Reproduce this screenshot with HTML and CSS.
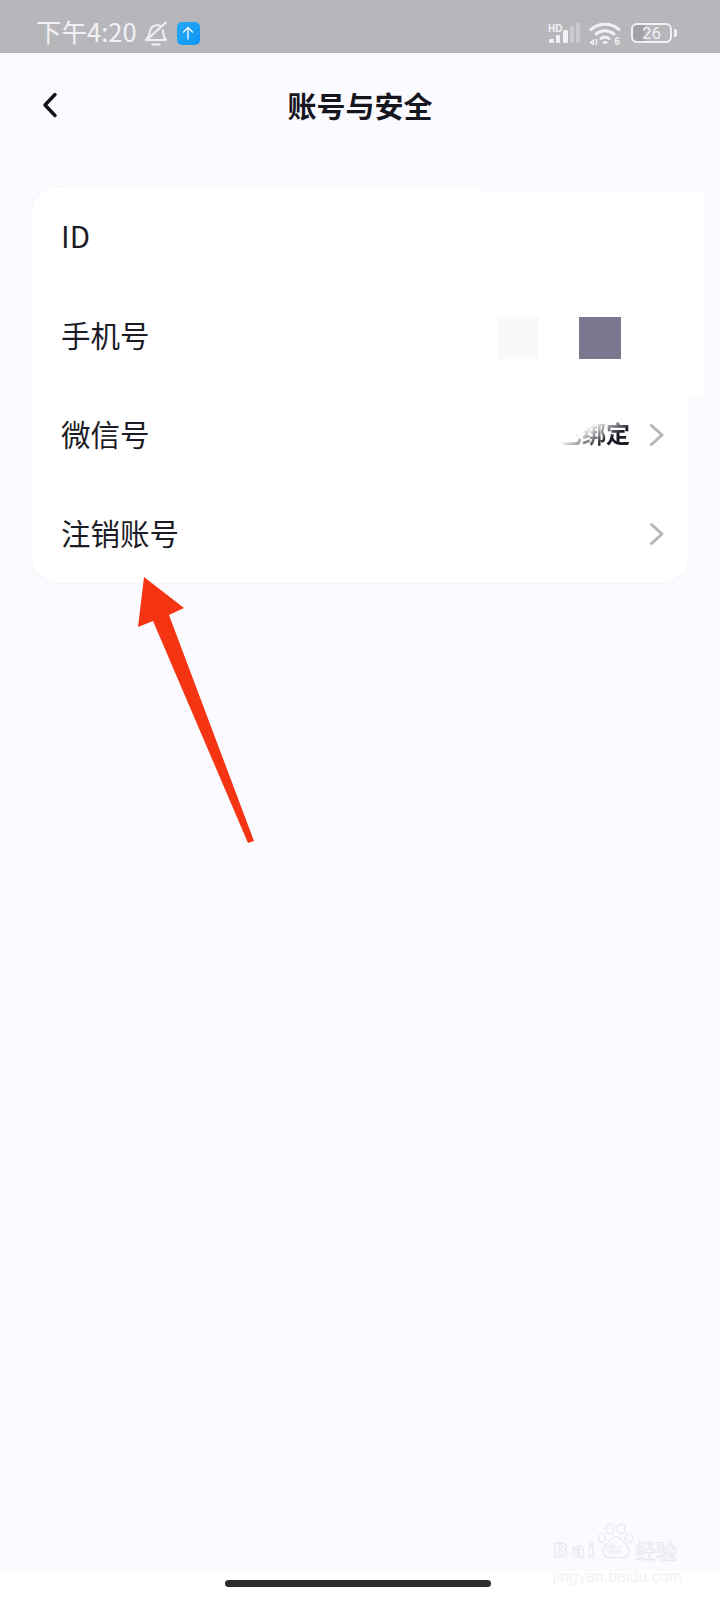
FILE: index.html
```html
<!DOCTYPE html>
<html lang="zh-CN">
<head>
  <meta charset="UTF-8" />
  <title>账号与安全</title>
  <link rel="stylesheet" href="styles.css">
</head>
<body>
  <div class="app">
    <div class="status-bar">
      <div class="status-left">
        <span class="time">下午4:20</span>
        <svg class="bell" width="24" height="25" viewBox="0 0 24 25" fill="none" stroke="#f1f1f3" stroke-width="2" stroke-linecap="round" stroke-linejoin="round">
          <path d="M2 19c2.500-2 3.200-4 3.700-7.500C6.300 7 9 4.500 12.500 4.200c2-.2 3.500.2 4.800 1.100" />
          <path d="M19 9.500c.2 4 .9 7.300 3 9.500H2" />
          <path d="M22 1.500 2.500 19" />
          <path d="M8.500 23.500h7" />
        </svg>
        <div class="app-badge">
          <svg width="12" height="14" viewBox="0 0 12 14" fill="none" stroke="#fff" stroke-width="1.300" stroke-linecap="round" stroke-linejoin="round"><path d="M6 13V1.500M1.500 6 6 1.500 10.500 6" /></svg>
        </div>
      </div>
      <div class="status-right">
        <svg width="33" height="21" viewBox="0 0 33 21" fill="#f1f1f3">
          <text x="0" y="8.500" class="hd">HD</text>
          <rect x="1" y="16" width="5" height="4" rx="1" />
          <rect x="8" y="12" width="4" height="8" rx="1" />
          <rect x="15" y="7" width="5" height="13" rx="1" />
          <rect x="22" y="3" width="4" height="17" rx="1" opacity=".35" />
          <rect x="28" y="0" width="4" height="20" rx="1" opacity=".35" />
        </svg>
        <svg class="wifi" width="33" height="24" viewBox="0 0 33 24" fill="none" stroke="#f1f1f3" stroke-width="3" stroke-linecap="round">
          <path d="M2 8.500C9.500 1.500 22.500 1.500 30 8.500" />
          <path d="M7 13c5.500-4.500 12.500-4.500 18 0" />
          <path d="M12 17.500c3-1.800 5-1.800 8 0" />
          <path d="M14.800 21.500h2.400" stroke-width="2.600" />
          <path d="M1.500 21.500l3-2.500v4.500zM7.500 18.500v5" stroke-width="1.500" />
          <text x="25.500" y="23.500" class="wifi-six">6</text>
        </svg>
        <div class="battery">
          <div class="battery-body"><span class="battery-level">26</span></div>
          <div class="battery-cap"></div>
        </div>
      </div>
    </div>

    <div class="main">
      <div class="nav">
        <svg class="back" width="16" height="26" viewBox="0 0 16 26" fill="none" stroke="#111118" stroke-width="3.400" stroke-linecap="round" stroke-linejoin="round"><path d="M13 2.500 3 13l10 10.500" /></svg>
        <div class="nav-title">账号与安全</div>
      </div>

      <div class="card">
        <div class="row"><span class="row-label">ID</span></div>
        <div class="row"><span class="row-label">手机号</span></div>
        <div class="row">
          <span class="row-label">微信号</span>
          <span class="row-value">已绑定</span>
          <svg class="chevron" width="15" height="24" viewBox="0 0 15 24" fill="none" stroke="#b6b6b9" stroke-width="3" stroke-linecap="round" stroke-linejoin="round"><path d="M2.500 2.500 13 12 2.500 21.500" /></svg>
        </div>
        <div class="row">
          <span class="row-label">注销账号</span>
          <svg class="chevron" width="15" height="24" viewBox="0 0 15 24" fill="none" stroke="#b6b6b9" stroke-width="3" stroke-linecap="round" stroke-linejoin="round"><path d="M2.500 2.500 13 12 2.500 21.500" /></svg>
        </div>

        <!-- 打码遮挡 -->
        <div class="redact">
          <div class="redact-square light"></div>
          <div class="redact-square dark"></div>
        </div>
      </div>

      <svg class="arrow" width="122" height="275" viewBox="0 0 122 275">
        <path fill="#f43412" d="M10 6 4 56 19 50 114 272 120 270 35 44 50 37z" />
      </svg>

      <div class="watermark">
        <div class="wm-top">
          <span class="wm-bai">Bai</span>
          <svg class="wm-paw" width="38" height="38" viewBox="0 0 38 38" fill="none" stroke="#e6e6ea" stroke-width="1.100">
            <ellipse cx="13" cy="6" rx="4" ry="5" />
            <ellipse cx="24" cy="6" rx="4" ry="5" />
            <ellipse cx="5" cy="15" rx="3.500" ry="4.500" />
            <ellipse cx="32" cy="15" rx="3.500" ry="4.500" />
            <path d="M19 14c-5 0-6 5-10 8-5 4-3 13 4 13 3 0 4-1 6-1s3 1 6 1c7 0 9-9 4-13-4-3-5-8-10-8z" />
            <text x="9.500" y="30" class="wm-du">du</text>
          </svg>
          <span class="wm-jy">经验</span>
        </div>
        <div class="wm-url">jingyan.baidu.com</div>
      </div>
    </div>

    <div class="home-area">
      <div class="home-bar"></div>
    </div>
  </div>
</body>
</html>
```

FILE: styles.css
```css
body {
  margin: 0;
  font-family: "Noto Sans CJK SC", "Noto Sans", sans-serif;
  background: #fafaff;
  color: #1c1c26;
}

.app {
  width: 720px;
  height: 1600px;
  display: flex;
  flex-direction: column;
  overflow: hidden;
}

/* 状态栏 */
.status-bar {
  height: 53px;
  flex: none;
  box-sizing: border-box;
  background: #b7b6bb;
  display: flex;
  justify-content: space-between;
  align-items: center;
  padding: 13px 43px 0 36px;
}

.status-left,
.status-right {
  display: flex;
  align-items: center;
}

.time {
  font-size: 25.500px;
  line-height: 30px;
  margin-bottom: 4px;
  color: #f1f1f3;
}

.bell {
  margin-left: 7px;
}

.app-badge {
  width: 23px;
  height: 23px;
  margin-left: 9px;
  border-radius: 5px;
  background: linear-gradient(135deg, #2aa8f8, #0d96f5);
  display: flex;
  align-items: center;
  justify-content: center;
}

.hd {
  font-family: "Liberation Sans", sans-serif;
  font-size: 10px;
  font-weight: 700;
}

.wifi {
  margin-left: 8px;
}

.wifi-six {
  font-family: "Liberation Sans", sans-serif;
  font-size: 10px;
  font-weight: 700;
  fill: #f1f1f3;
  stroke: none;
}

.battery {
  display: flex;
  align-items: center;
  margin-left: 9px;
}

.battery-body {
  width: 41px;
  height: 20px;
  box-sizing: border-box;
  border: 2px solid #f1f1f3;
  border-radius: 6px;
  display: flex;
  align-items: center;
  justify-content: center;
  background: linear-gradient(90deg, #a2a1a6 32%, transparent 32%);
}

.battery-level {
  font-family: Roboto, sans-serif;
  font-size: 17px;
  line-height: 18px;
  color: #f1f1f3;
}

.battery-cap {
  width: 3px;
  height: 8px;
  margin-left: 2px;
  border-radius: 0 2px 2px 0;
  background: #f1f1f3;
}

/* 页面 */
.main {
  flex: 1;
  position: relative;
  background: #fafaff;
}

.nav {
  height: 106px;
  box-sizing: border-box;
  padding-bottom: 2px;
  display: flex;
  align-items: center;
  justify-content: center;
}

.back {
  position: absolute;
  left: 42px;
  top: 39px;
}

.nav-title {
  font-size: 29px;
  font-weight: 700;
  color: #16161e;
}

.card {
  position: relative;
  margin: 28px 31px 0;
  background: #fff;
  border-radius: 28px;
  box-shadow: 0 0 0 1px #f5f5fa;
}

.row {
  height: 99px;
  box-sizing: border-box;
  padding: 0 25px 4px 30px;
  display: flex;
  align-items: center;
  font-size: 29.500px;
}

.row-label {
  flex: 1;
}

.row-value {
  margin-right: 19px;
  font-size: 24px;
  font-weight: 700;
  color: #1c1c26;
  -webkit-mask-image: linear-gradient(150deg, transparent 38%, rgba(0, 0, 0, 0.5) 55%, #000 70%);
  mask-image: linear-gradient(150deg, transparent 38%, rgba(0, 0, 0, 0.5) 55%, #000 70%);
}

.chevron {
  margin-top: 4px;
}

.redact {
  position: absolute;
  left: 447px;
  top: 0;
  width: 226px;
  height: 210px;
  box-sizing: border-box;
  border-top: 6px solid #fafaff;
  background: #fff;
  display: flex;
  gap: 40px;
  padding: 124px 0 0 19px;
}

.redact-square {
  width: 42px;
  height: 42px;
}

.light {
  background: #f9f9fa;
}

.dark {
  background: #7a788f;
}

.arrow {
  position: absolute;
  left: 134px;
  top: 518px;
}

/* 水印 */
.watermark {
  position: absolute;
  left: 553px;
  top: 1470px;
  width: 130px;
}

.wm-top {
  display: flex;
  align-items: flex-end;
  height: 38px;
}

.wm-bai {
  font-family: "DejaVu Sans", sans-serif;
  font-size: 20px;
  line-height: 21px;
  font-weight: 700;
  letter-spacing: 3px;
  color: transparent;
  -webkit-text-stroke: 0.8px #e6e6ea;
  width: 44px;
  flex: none;
}

.wm-paw {
  flex: none;
}

.wm-du {
  font-family: "Liberation Sans", sans-serif;
  font-size: 12px;
  font-weight: 700;
  fill: none;
  stroke: #e6e6ea;
  stroke-width: 0.5;
}

.wm-jy {
  font-size: 21px;
  line-height: 22px;
  color: transparent;
  -webkit-text-stroke: 0.7px #e6e6ea;
  white-space: nowrap;
}

.wm-url {
  margin-top: 8px;
  font-family: "Liberation Sans", sans-serif;
  font-size: 16px;
  line-height: 16px;
  color: #f2f2f5;
  white-space: nowrap;
}

/* 底部 */
.home-area {
  height: 29px;
  flex: none;
  background: #fff;
  padding: 9px 0 0 225px;
  box-sizing: border-box;
}

.home-bar {
  width: 266px;
  height: 7px;
  border-radius: 4px;
  background: #2c2c2e;
}
```
